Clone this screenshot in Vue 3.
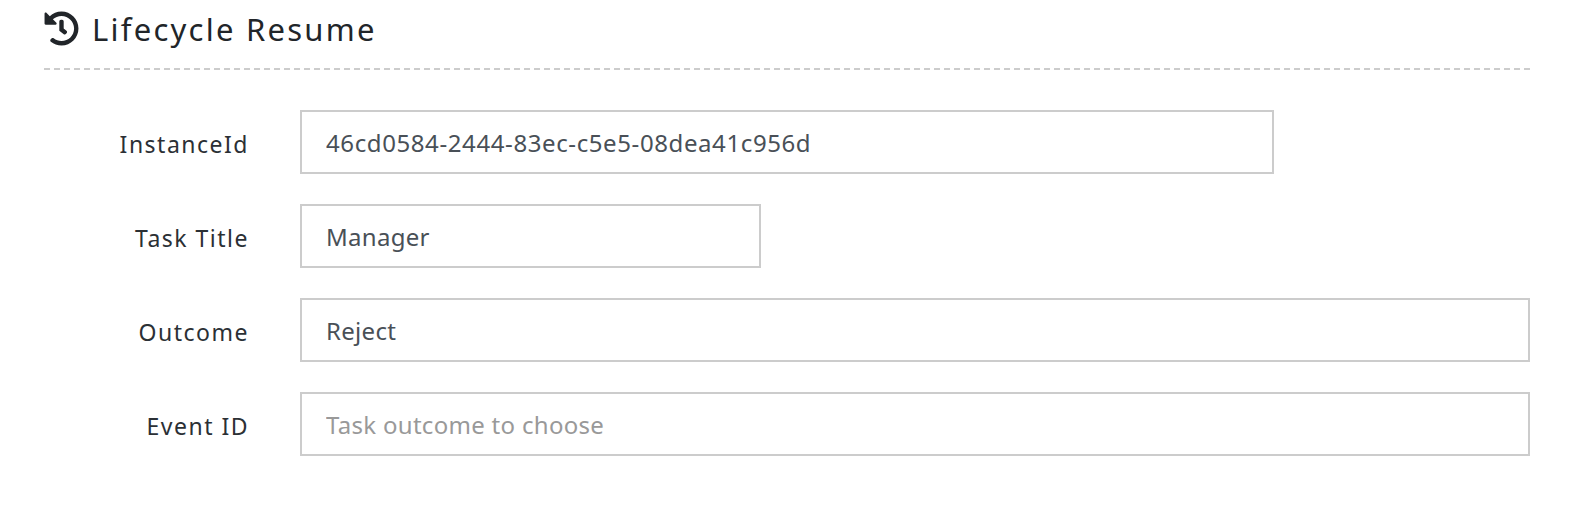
<script setup>
const rows = [
  { label: 'InstanceId', value: '46cd0584-2444-83ec-c5e5-08dea41c956d', size: 'wide' },
  { label: 'Task Title', value: 'Manager', size: 'small' },
  { label: 'Outcome', value: 'Reject', size: 'full' },
  { label: 'Event ID', value: '', placeholder: 'Task outcome to choose', size: 'full' }
]
</script>

<template>
  <div class="page">
    <h2 class="title">
      <svg class="icon" viewBox="0 0 512 512" aria-hidden="true">
        <path fill="currentColor" d="M504 255.531c.253 136.64-111.18 248.372-247.82 248.468-59.015.042-113.223-20.53-155.822-54.911-11.077-8.94-11.905-25.541-1.839-35.607l11.267-11.267c8.609-8.609 22.353-9.551 31.891-1.984C173.062 425.135 212.781 440 256 440c101.705 0 184-82.311 184-184 0-101.705-82.311-184-184-184-48.814 0-93.149 18.969-126.068 49.932l50.754 50.754c10.08 10.08 2.941 27.314-11.313 27.314H24c-8.837 0-16-7.163-16-16V38.627c0-14.254 17.234-21.393 27.314-11.314l49.372 49.372C129.209 31.084 189.552 8 256 8c136.81 0 247.747 110.78 248 247.531zm-180.912 78.784l9.823-12.63c8.138-10.463 6.253-25.542-4.21-33.679L288 256.349V152c0-13.255-10.745-24-24-24h-16c-13.255 0-24 10.745-24 24v135.651l65.409 50.874c10.463 8.137 25.541 6.253 33.679-4.21z" />
      </svg>
      <span>Lifecycle Resume</span>
    </h2>

    <form class="form" @submit.prevent>
      <div v-for="row in rows" :key="row.label" class="row">
        <label class="label">{{ row.label }}</label>
        <input class="input" :class="row.size" type="text" :value="row.value" :placeholder="row.placeholder" />
      </div>
    </form>
  </div>
</template>

<style>
html, body {
  margin: 0;
  background: #fff;
}
</style>

<style scoped>
.page {
  padding: 0 40px 0 44px;
  font-family: "Noto Sans", "Open Sans", sans-serif;
  color: #212529;
}

.title {
  display: flex;
  align-items: center;
  gap: 13px;
  height: 70px;
  margin: 0;
  padding-bottom: 12px;
  box-sizing: border-box;
  background: repeating-linear-gradient(to right, #ccc 0 6px, transparent 6px 10px) left bottom / 100% 2px no-repeat;
  font-size: 31px;
  font-weight: 400;
  letter-spacing: 2.25px;
}

.icon {
  width: 35px;
  height: 35px;
  margin-bottom: 1px;
}

.form {
  display: flex;
  flex-direction: column;
  gap: 30px;
  padding-top: 40px;
}

.row {
  display: flex;
  align-items: center;
}

.label {
  width: 205px;
  margin-right: 51px;
  padding-top: 4px;
  text-align: right;
  font-size: 23px;
  letter-spacing: 1.5px;
  color: #2b3035;
}

.input {
  height: 64px;
  padding: 0 24px;
  box-sizing: border-box;
  border: 2px solid #ccc;
  border-radius: 0;
  outline: none;
  font-family: inherit;
  font-size: 24px;
  letter-spacing: 0.3px;
  color: #495057;
}

.input::placeholder {
  color: #999;
  opacity: 1;
}

.wide {
  width: 974px;
  letter-spacing: 0.6px;
}

.small {
  width: 461px;
}

.full {
  flex: 1;
}
</style>
